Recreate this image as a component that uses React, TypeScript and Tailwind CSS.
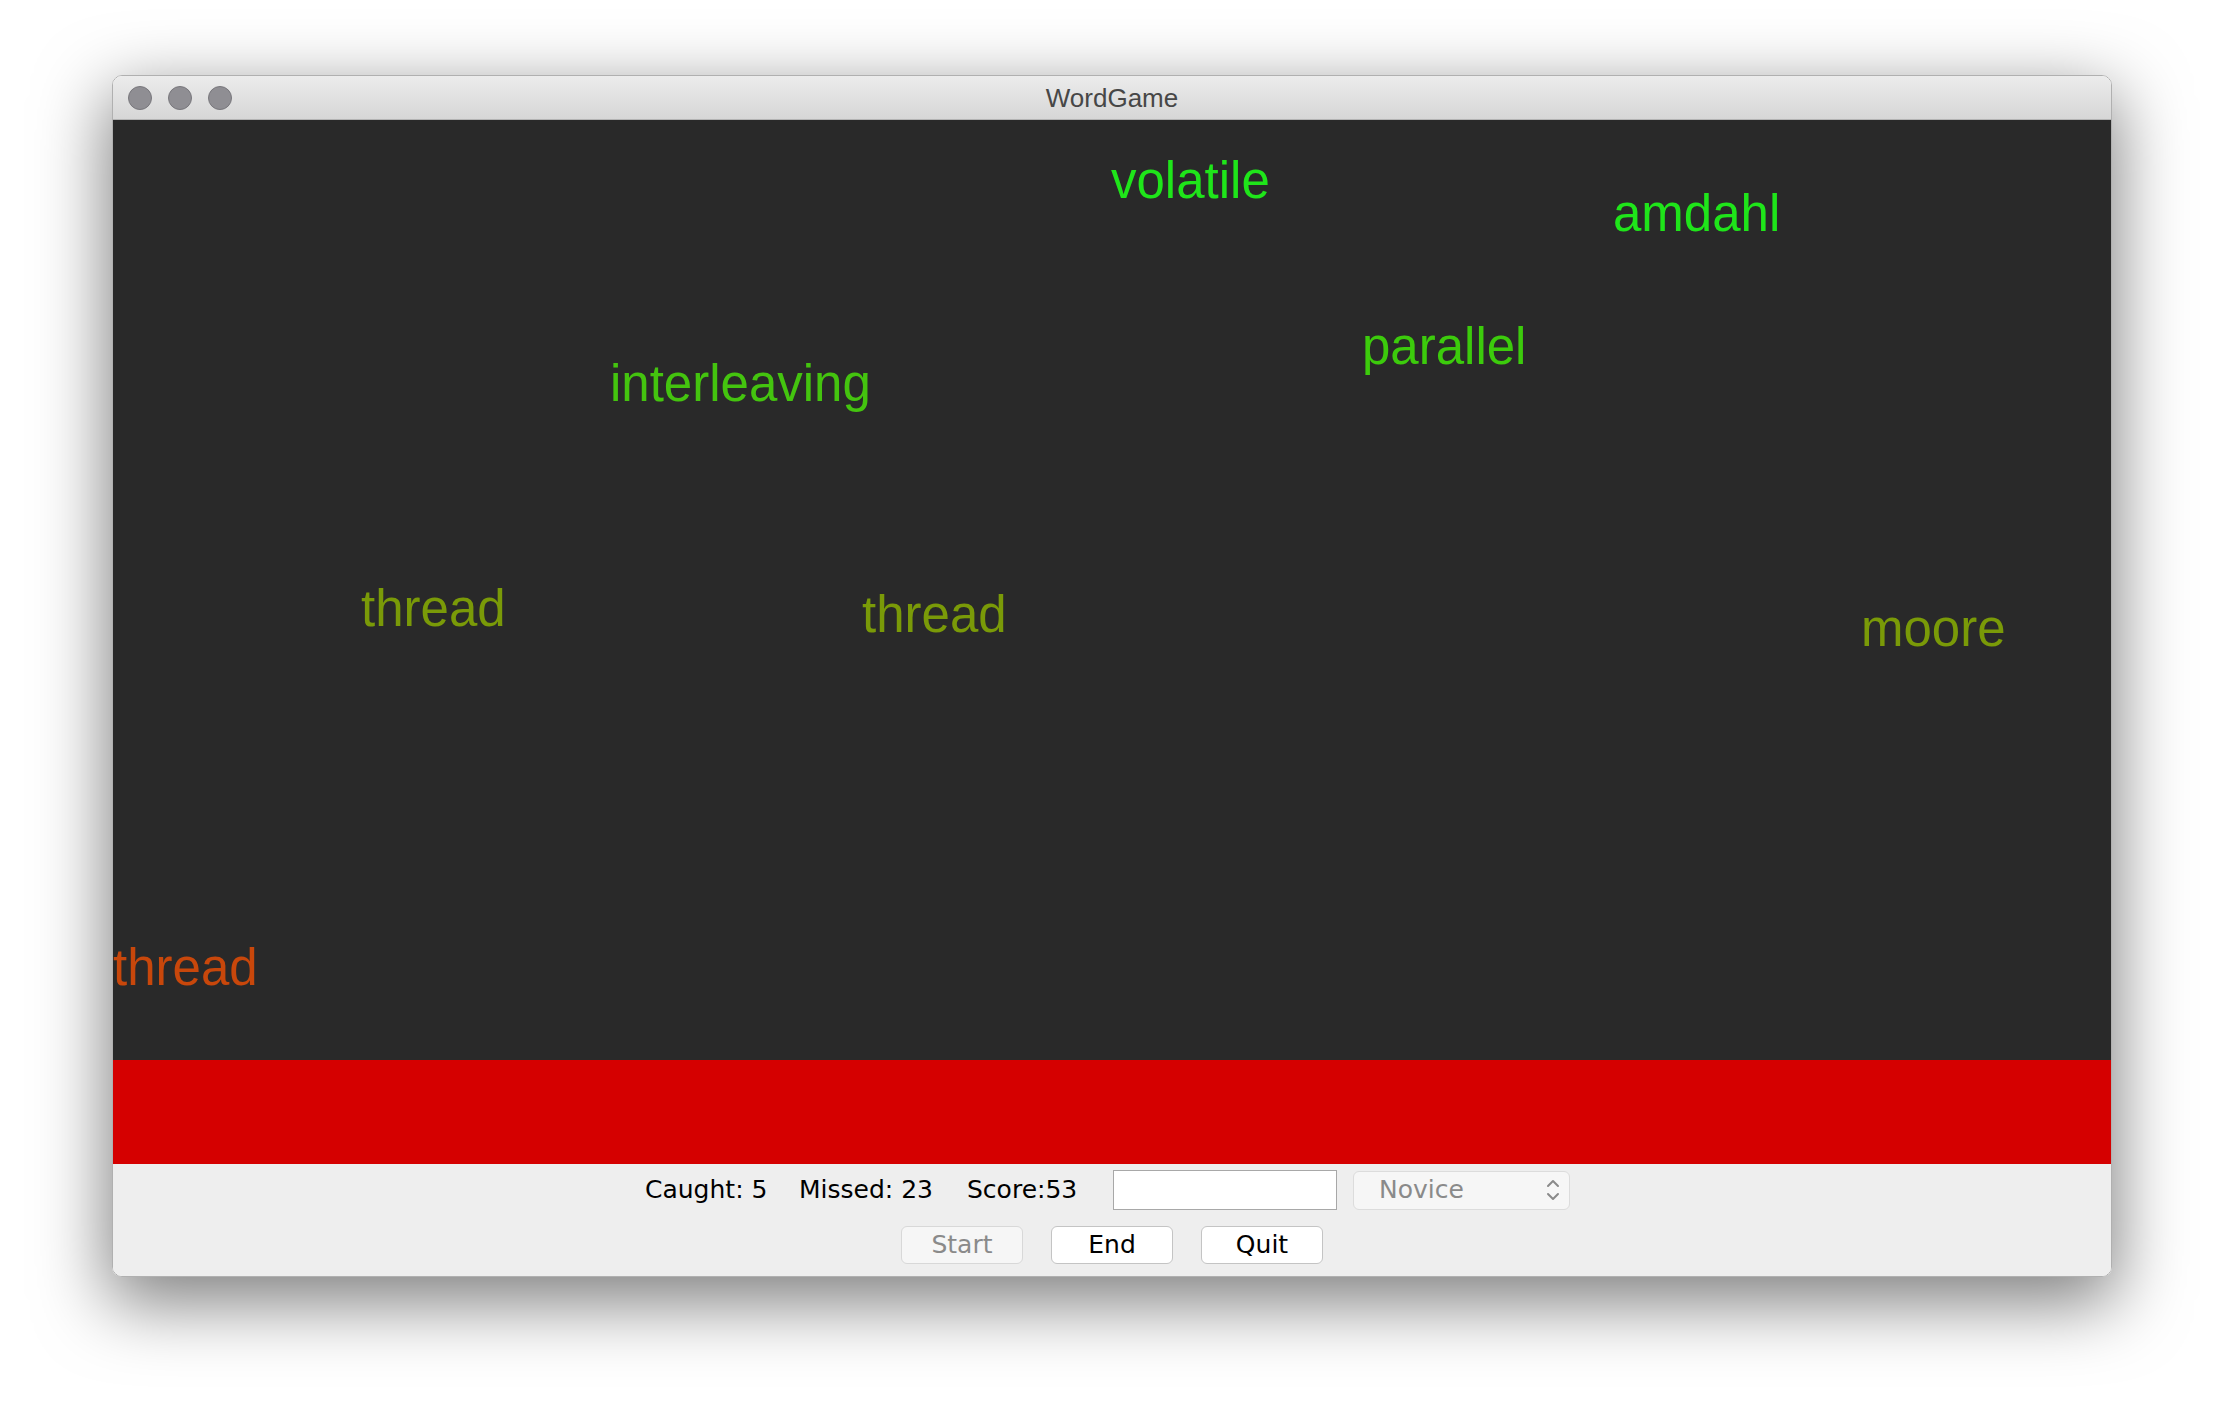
import React from "react";

type Word = { text: string; left: number; top: number; color: string };

const words: Word[] = [
  { text: "volatile", left: 998, top: 35, color: "#1fe51a" },
  { text: "amdahl", left: 1500, top: 68, color: "#1fe51a" },
  { text: "parallel", left: 1249, top: 201, color: "#3ccb0c" },
  { text: "interleaving", left: 497, top: 238, color: "#44c40f" },
  { text: "thread", left: 248, top: 463, color: "#7a9a08" },
  { text: "thread", left: 749, top: 469, color: "#7a9a08" },
  { text: "moore", left: 1748, top: 483, color: "#7a9a08" },
  { text: "thread", left: 0, top: 822, color: "#c8470b" },
];

function Chevrons() {
  return (
    <svg width="16" height="26" viewBox="0 0 16 26" fill="none">
      <path d="M3 9 L8 4 L13 9" stroke="#8a8a8a" strokeWidth="2" strokeLinecap="round" strokeLinejoin="round" />
      <path d="M3 17 L8 22 L13 17" stroke="#8a8a8a" strokeWidth="2" strokeLinecap="round" strokeLinejoin="round" />
    </svg>
  );
}

export default function App() {
  const ui = { fontFamily: '"DejaVu Sans", "Noto Sans", sans-serif' };
  return (
    <div className="w-[2224px] h-[1424px] bg-white pt-[75px] pl-[112px] overflow-hidden">
      <div className="w-[2000px] flex flex-col rounded-[10px] border border-[#b0b0b0] overflow-hidden shadow-[0_22px_70px_4px_rgba(0,0,0,0.5)]">
        {/* Title bar */}
        <div className="relative h-[44px] flex items-center justify-center bg-gradient-to-b from-[#ececec] to-[#d6d6d6] border-b border-[#b3b3b3]">
          <div className="absolute left-[15px] top-[10px] flex gap-[16px]">
            <div className="w-[24px] h-[24px] rounded-full bg-[#8f8e93] border border-[#78777c]" />
            <div className="w-[24px] h-[24px] rounded-full bg-[#8f8e93] border border-[#78777c]" />
            <div className="w-[24px] h-[24px] rounded-full bg-[#8f8e93] border border-[#78777c]" />
          </div>
          <span
            className="text-[26px] text-[#474747] leading-none"
            style={{ fontFamily: '"Liberation Sans", Arial, sans-serif' }}
          >
            WordGame
          </span>
        </div>

        {/* Game canvas */}
        <div className="relative h-[940px] bg-[#292929] overflow-hidden">
          {words.map((w, i) => (
            <span
              key={i}
              className="absolute text-[51px] leading-none whitespace-nowrap"
              style={{
                left: w.left,
                top: w.top,
                color: w.color,
                fontFamily: '"Liberation Sans", Arial, sans-serif',
              }}
            >
              {w.text}
            </span>
          ))}
        </div>

        {/* Red bar */}
        <div className="h-[104px] bg-[#d50000]" />

        {/* Controls */}
        <div className="h-[112px] bg-[#eeeeee] flex flex-col pt-[5px]" style={ui}>
          <div className="h-[42px] flex items-center pl-[532px] text-[25px] text-black">
            <span className="w-[154px] whitespace-nowrap">Caught: 5</span>
            <span className="w-[168px] whitespace-nowrap">Missed: 23</span>
            <span className="w-[146px] whitespace-nowrap">Score:53</span>
            <div className="w-[224px] h-[40px] bg-white border border-[#a8a8a8]" />
            <div className="ml-[16px] w-[217px] h-[39px] rounded-[6px] bg-[#f6f6f6] border border-[#dcdcdc] flex items-center pl-[25px] pr-[8px] justify-between">
              <span className="text-[#8a8a8a]">Novice</span>
              <Chevrons />
            </div>
          </div>
          <div className="mt-[15px] flex justify-center gap-[28px] text-[25px]">
            <div className="w-[122px] h-[38px] rounded-[6px] bg-[#f6f6f6] border border-[#d8d8d8] flex items-center justify-center text-[#8a8a8a]">
              Start
            </div>
            <div className="w-[122px] h-[38px] rounded-[6px] bg-white border border-[#c4c4c4] flex items-center justify-center text-black">
              End
            </div>
            <div className="w-[122px] h-[38px] rounded-[6px] bg-white border border-[#c4c4c4] flex items-center justify-center text-black">
              Quit
            </div>
          </div>
        </div>
      </div>
    </div>
  );
}
